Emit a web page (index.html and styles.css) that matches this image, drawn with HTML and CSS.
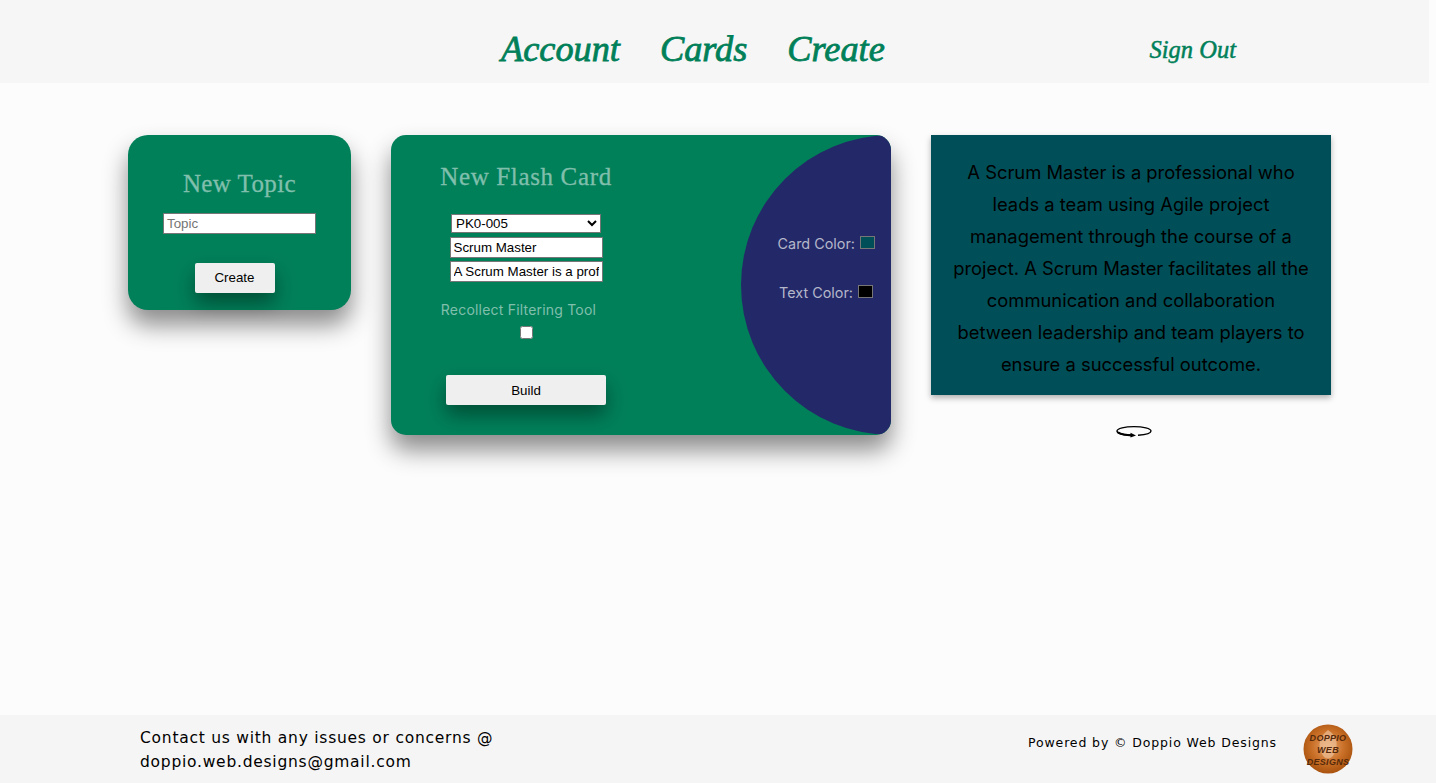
FILE: index.html
```html
<!DOCTYPE html>
<html lang="en">
<head>
<meta charset="utf-8">
<title>Create</title>
<link rel="stylesheet" href="styles.css">
</head>
<body>
<div class="page">
  <header class="header">
    <nav class="nav">
      <a class="nav-link">Account</a>
      <a class="nav-link">Cards</a>
      <a class="nav-link">Create</a>
    </nav>
    <a class="signout">Sign Out</a>
  </header>
  <main class="main">
    <section class="topic-card">
      <h2 class="topic-title">New Topic</h2>
      <input class="topic-input" type="text" placeholder="Topic">
      <button class="btn topic-btn">Create</button>
    </section>
    <section class="flash-card">
      <div class="flash-form">
        <h2 class="flash-title">New Flash Card</h2>
        <select class="flash-select"><option>PK0-005</option></select>
        <input class="flash-input first" type="text" value="Scrum Master">
        <input class="flash-input" type="text" value="A Scrum Master is a professional who">
        <label class="filter-label">Recollect Filtering Tool</label>
        <input class="filter-check" type="checkbox">
        <button class="btn build-btn">Build</button>
      </div>
      <div class="flash-side">
        <div class="color-row card-color">Card Color: <span class="swatch swatch-card"></span></div>
        <div class="color-row text-color">Text Color: <span class="swatch swatch-text"></span></div>
      </div>
    </section>
    <section class="preview">
      <div class="preview-card">A Scrum Master is a professional who leads a team using Agile project management through the course of a project. A Scrum Master facilitates all the communication and collaboration between leadership and team players to ensure a successful outcome.</div>
      <svg class="flip" width="38" height="14" viewBox="0 0 38 14" aria-hidden="true">
        <path d="M23 11.3C31 10.8 36 9.2 36 7C36 4.5 28 2.6 19 2.6C10 2.6 2 4.5 2 7C2 9.3 8 11 16 11.3" fill="none" stroke="#000" stroke-width="1.4"/>
        <path d="M3 8.4C6 10.2 11 11.2 17 11.4" fill="none" stroke="#000" stroke-width="2.2"/>
        <path d="M15.5 8.8L21 11.5L15.5 13.6Z" fill="#000"/>
      </svg>
    </section>
  </main>
  <footer class="footer">
    <div class="contact">Contact us with any issues or concerns @<br>doppio.web.designs@gmail.com</div>
    <div class="powered">
      <span class="powered-text">Powered by © Doppio Web Designs</span>
      <svg class="logo" width="50" height="50" viewBox="0 0 50 50" role="img" aria-label="Doppio Web Designs logo">
        <defs>
          <radialGradient id="coffee" cx="50%" cy="45%" r="55%">
            <stop offset="0" stop-color="#e9a66e"/>
            <stop offset="0.6" stop-color="#c96f27"/>
            <stop offset="1" stop-color="#a9530f"/>
          </radialGradient>
        </defs>
        <circle cx="25" cy="25" r="24.5" fill="url(#coffee)"/>
        <path d="M25 6C34 12 36 20 31 30C28 36 22 36 19 30C14 21 17 12 25 6Z" fill="#eec39c" opacity=".65"/>
        <text class="logo-text" x="25" y="17" text-anchor="middle">DOPPIO</text>
        <text class="logo-text" x="25" y="29" text-anchor="middle">WEB</text>
        <text class="logo-text" x="25" y="41" text-anchor="middle">DESIGNS</text>
      </svg>
    </div>
  </footer>
</div>
</body>
</html>
```

FILE: styles.css
```css
* { box-sizing: border-box; }
html, body { margin: 0; height: 100%; }
body { background: #fcfcfc; font-family: Inter, "Liberation Sans", sans-serif; overflow: hidden; }
.page { height: 783px; display: flex; flex-direction: column; }

.header { height: 83px; width: 1429px; background: #f6f6f6; display: flex; align-items: center; padding: 14px 0 0 501px; flex: none; }
.nav { display: flex; gap: 40px; }
.nav-link { font-family: "Liberation Serif", serif; font-style: italic; font-weight: 400; font-size: 36.3px; -webkit-text-stroke: .8px #008059; color: #008059; line-height: 48px; }
.signout { font-family: "Liberation Serif", serif; font-style: italic; font-weight: 400; font-size: 24.5px; -webkit-text-stroke: .5px #008059; color: #008059; margin: 3px 193px 0 auto; }

.main { flex: 1; display: flex; align-items: flex-start; gap: 40px; padding: 52px 0 0 128px; }

.topic-card { width: 223px; height: 175px; background: #008059; border-radius: 20px; box-shadow: 0 15px 25px rgba(0,0,0,.45); display: flex; flex-direction: column; align-items: center; padding-top: 34px; flex: none; }
.topic-title { margin: 0; font-family: "Liberation Serif", serif; font-weight: 400; font-size: 25px; line-height: 29px; letter-spacing: .4px; -webkit-text-stroke: .3px #80bfac; color: #80bfac; }
.topic-input { width: 153px; height: 21px; margin-top: 15px; border: 1px solid #767676; padding: 0 3px; font: 13.33px "Liberation Sans", sans-serif; background: #fff; border-radius: 0; }
.topic-input::placeholder { color: #757575; }

.btn { background: #efefef; border: 0; border-radius: 2px; font: 13.33px "Liberation Sans", sans-serif; color: #000; box-shadow: 0 10px 20px rgba(0,0,0,.4); }
.topic-btn { width: 80px; height: 30px; margin-top: 29px; margin-right: 10px; padding: 0 0 2px; }

.flash-card { width: 500px; height: 300px; background: #008059; border-radius: 15px; box-shadow: 0 15px 25px rgba(0,0,0,.45); display: flex; justify-content: space-between; flex: none; overflow: hidden; }
.flash-form { width: 270px; display: flex; flex-direction: column; align-items: center; padding-top: 27px; }
.flash-title { margin: 0; font-family: "Liberation Serif", serif; font-weight: 400; font-size: 25px; line-height: 29px; letter-spacing: .65px; -webkit-text-stroke: .3px #80bfac; color: #80bfac; }
.flash-select { width: 150px; height: 19px; margin-top: 23px; font: 13.33px "Liberation Sans", sans-serif; border: 1px solid #767676; background: #fff; border-radius: 0; padding: 0; }
.flash-input { width: 153px; height: 21px; margin-top: 3px; border: 1px solid #767676; padding: 0 3px; font: 13.33px "Liberation Sans", sans-serif; color: #000; background: #fff; border-radius: 0; }
.flash-input.first { margin-top: 4px; }
.filter-label { margin: 19px 15px 0 0; font-size: 14px; line-height: 17px; letter-spacing: .2px; color: #80bfac; white-space: nowrap; }
.filter-check { width: 13px; height: 13px; margin: 8px 0 0; }
.build-btn { width: 160px; height: 30px; margin-top: 36px; }

.flash-side { width: 150px; height: 300px; background: #232968; border-radius: 150px 0 0 150px; color: #b4b6ca; font-size: 14.4px; position: relative; flex: none; }
.color-row { display: flex; align-items: center; gap: 5px; white-space: nowrap; position: absolute; }
.card-color { top: 100px; right: 16px; }
.text-color { top: 149px; right: 18px; }
.swatch { width: 15px; height: 13px; border: 1px solid #767676; display: block; position: relative; top: -1px; }
.swatch-card { background: #004f58; }
.swatch-text { background: #000; }

.preview { width: 400px; display: flex; flex-direction: column; align-items: center; flex: none; }
.preview-card { width: 400px; height: 260px; background: #004f58; box-shadow: 0 3px 6px rgba(0,0,0,.3); color: #000; font-size: 18.36px; line-height: 32px; text-align: center; padding: 21px 20px 0; }
.flip { margin-top: 29px; margin-left: 6px; }

.footer { height: 68px; background: #f5f5f5; display: flex; justify-content: space-between; align-items: center; padding: 0 83px 0 140px; flex: none; }
.contact { font-family: "DejaVu Sans", sans-serif; font-size: 15.5px; line-height: 24px; letter-spacing: .75px; color: #000; padding-top: 1px; }
.powered { display: flex; align-items: center; gap: 26px; }
.powered-text { font-family: "DejaVu Sans", sans-serif; font-size: 12.5px; letter-spacing: .87px; color: #000; margin-bottom: 14px; }
.logo { display: block; }
.logo-text { font: italic 700 9px "Liberation Sans", sans-serif; letter-spacing: .3px; fill: #55290a; }
```
